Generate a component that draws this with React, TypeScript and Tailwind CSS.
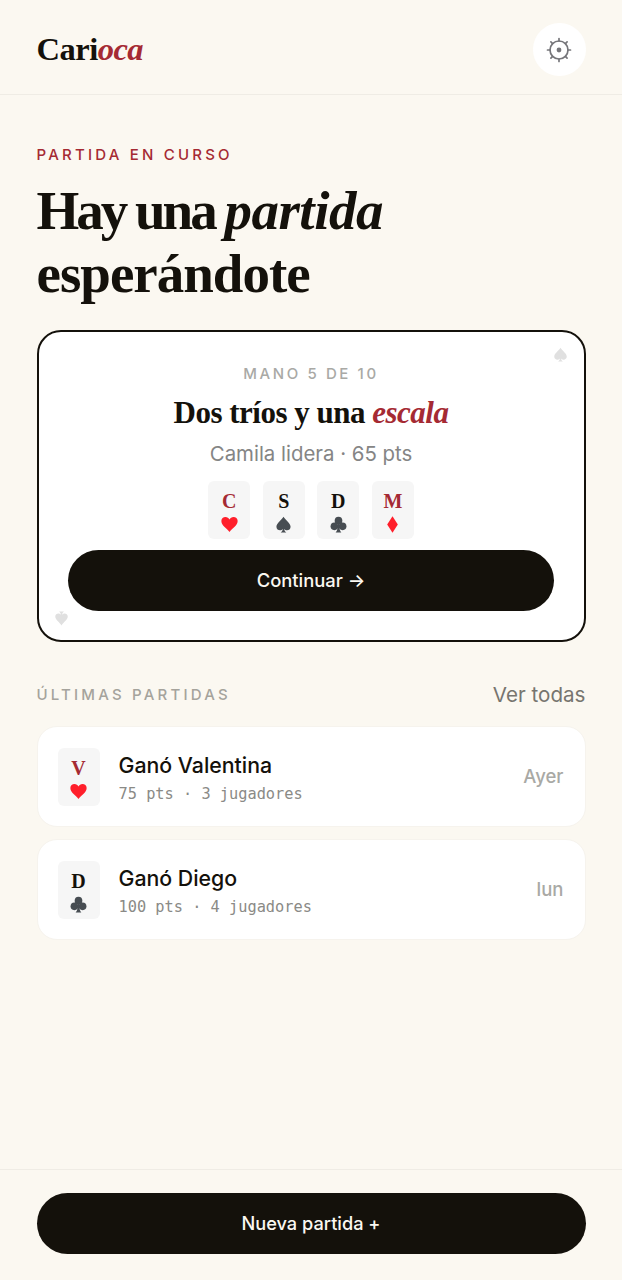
import React from "react";

const serif = "font-['Liberation_Serif',serif]";
const sans = "font-['Inter',sans-serif]";
const mono = "font-['DejaVu_Sans_Mono',monospace]";

const SPADE =
  "M12 1C9 6 2 10 2 15.2C2 18.6 4.5 20.2 7 20.2C8.8 20.2 10 19.2 11 18.2C10.8 20.2 10 22 8 23.2H16C14 22 13.2 20.2 13 18.2C14 19.2 15.2 20.2 17 20.2C19.5 20.2 22 18.6 22 15.2C22 10 15 6 12 1Z";

type Suit = "heart" | "spade" | "club" | "diamond";

const SuitIcon = ({ suit, className }: { suit: Suit; className?: string }) => {
  return (
    <svg viewBox="0 0 24 24" fill="currentColor" className={className}>
      {suit === "heart" && (
        <path d="M12 22.5C9 18.5 .5 13.5 .5 7.2C.5 3.6 3.2 1.5 6.3 1.5C8.8 1.5 11 3 12 5C13 3 15.2 1.5 17.7 1.5C20.8 1.5 23.5 3.6 23.5 7.2C23.5 13.5 15 18.5 12 22.5Z" />
      )}
      {suit === "spade" && <path d={SPADE} />}
      {suit === "club" && (
        <>
          <circle cx="12" cy="6.6" r="5.4" />
          <circle cx="6.2" cy="14.6" r="5.4" />
          <circle cx="17.8" cy="14.6" r="5.4" />
          <path d="M11 10C11 17 10.4 21.4 8 23.2H16C13.6 21.4 13 17 13 10Z" />
        </>
      )}
      {suit === "diamond" && <path d="M12 .5L19.5 12L12 23.5L4.5 12Z" />}
    </svg>
  );
};

const MiniCard = ({ letter, suit, red }: { letter: string; suit: Suit; red?: boolean }) => {
  return (
    <div className="w-[42px] h-[58px] rounded-md bg-[#f6f6f6] flex flex-col items-center pt-[9px] gap-[4px]">
      <span
        className={`${serif} font-bold text-[20px] leading-[22px] ${red ? "text-[#a52a33]" : "text-[#14110b]"}`}
      >
        {letter}
      </span>
      <SuitIcon suit={suit} className={`w-[17px] h-[17px] ${red ? "text-[#ff1f2b]" : "text-[#474d52]"}`} />
    </div>
  );
};

const GameRow = ({
  letter,
  suit,
  red,
  title,
  meta,
  when,
}: {
  letter: string;
  suit: Suit;
  red?: boolean;
  title: string;
  meta: string;
  when: string;
}) => {
  return (
    <div className="h-[101px] rounded-[20px] bg-white border border-[#f6f3ed] flex items-center px-[20px]">
      <MiniCard letter={letter} suit={suit} red={red} />
      <div className="ml-[19px] flex-1 pt-[2px]">
        <p className={`${sans} font-medium text-[21.3px] leading-[28px] text-[#14110b]`}>{title}</p>
        <p className={`${mono} text-[15.3px] leading-[20px] mt-[5px] text-[#8a8a86]`}>{meta}</p>
      </div>
      <span className={`${sans} font-medium text-[18.5px] text-[#a9a9a5] pr-[1px]`}>{when}</span>
    </div>
  );
};

const App = () => {
  return (
    <div className={`${sans} min-h-[1280px] bg-[#fbf8f1] flex flex-col`}>
      {/* Header */}
      <header className="h-[95px] border-b border-[#efece5] flex items-center justify-between px-[36.5px] pt-[5px]">
        <h1 className={`${serif} font-bold text-[32.5px] tracking-[-0.5px] text-[#14110b]`}>
          Cari<em className="text-[#a52a33]">oca</em>
        </h1>
        <button className="w-[53px] h-[53px] rounded-full bg-white flex items-center justify-center">
          <svg width="26" height="26" viewBox="0 0 26 26" fill="none" stroke="#76767a" strokeWidth="1.7">
            <circle cx="13" cy="13" r="9" />
            <circle cx="13" cy="13" r="2.4" fill="#76767a" stroke="none" />
            <path
              d="M13 1.5v2.5M13 22v2.5M1.5 13h2.5M22 13h2.5M4.9 4.9l1.7 1.7M19.4 19.4l1.7 1.7M4.9 21.1l1.7-1.7M19.4 6.6l1.7-1.7"
              strokeLinecap="round"
            />
          </svg>
        </button>
      </header>

      <main className="flex-1 px-[36.5px] pt-[50px]">
        <p className="text-[15px] leading-[20px] font-medium tracking-[3.2px] text-[#a52a33]">PARTIDA EN CURSO</p>
        <h2 className={`${serif} font-bold text-[55px] leading-[63px] tracking-[-1px] mt-[14px] text-[#14110b]`}>
          <span className="tracking-[-3px] [word-spacing:-1px]">Hay una </span>
          <em className="tracking-[-0.5px]">partida</em>
          <br />
          esperándote
        </h2>

        {/* Current game */}
        <section className="relative mt-[25px] h-[312px] rounded-[24px] border-2 border-[#14110b] bg-white flex flex-col items-center px-[29.5px] pt-[30px]">
          <SuitIcon suit="spade" className="absolute top-[15px] right-[16px] w-[15px] h-[15px] text-[#e0e0e0]" />
          <SuitIcon suit="spade" className="absolute bottom-[14px] left-[15px] rotate-180 w-[15px] h-[15px] text-[#e0e0e0]" />
          <p className="text-[15px] leading-[24px] font-medium tracking-[2.6px] text-[#a9a9a5]">MANO 5 DE 10</p>
          <h3 className={`${serif} font-bold text-[31px] leading-[40px] tracking-[-0.5px] mt-[7px] text-[#14110b]`}>
            Dos tríos y una <em className="text-[#a52a33]">escala</em>
          </h3>
          <p className="text-[20.4px] leading-[28px] mt-[7px] text-[#858585]">Camila lidera · 65 pts</p>
          <div className="flex gap-[12.6px] mt-[13px]">
            <MiniCard letter="C" suit="heart" red />
            <MiniCard letter="S" suit="spade" />
            <MiniCard letter="D" suit="club" />
            <MiniCard letter="M" suit="diamond" red />
          </div>
          <button className="w-full h-[61px] mt-[11px] rounded-full bg-[#14110b] text-[#fbf8f1] text-[18.4px] font-medium">
            Continuar →
          </button>
        </section>

        {/* Recent games */}
        <div className="flex items-center justify-between mt-[39px]">
          <p className="text-[15px] font-medium tracking-[3.2px] text-[#a5a39c]">ÚLTIMAS PARTIDAS</p>
          <a className="text-[20.6px] leading-[28px] text-[#77756f]">Ver todas</a>
        </div>
        <div className="flex flex-col gap-[12px] mt-[17px]">
          <GameRow letter="V" suit="heart" red title="Ganó Valentina" meta="75 pts · 3 jugadores" when="Ayer" />
          <GameRow letter="D" suit="club" title="Ganó Diego" meta="100 pts · 4 jugadores" when="lun" />
        </div>
      </main>

      {/* Footer */}
      <footer className="border-t border-[#efece5] px-[36.5px] pt-[23px] pb-[26px]">
        <button className="w-full h-[61px] rounded-full bg-[#14110b] text-[#fbf8f1] text-[18.2px] font-medium">
          Nueva partida +
        </button>
      </footer>
    </div>
  );
};

export default App;
